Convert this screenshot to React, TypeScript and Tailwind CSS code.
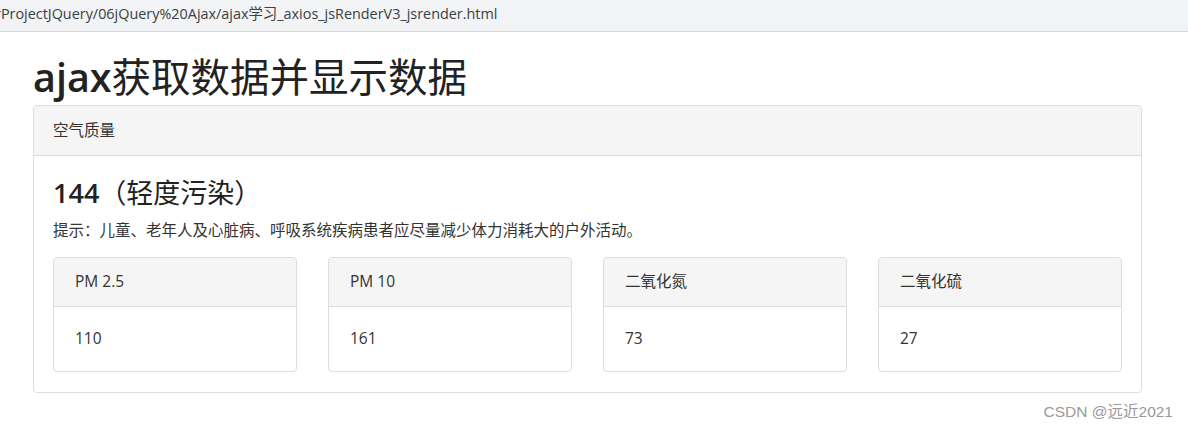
import React from "react";

const font = { fontFamily: '"Open Sans", "Noto Sans CJK SC", sans-serif' };

const items = [
  { name: "PM 2.5", value: "110" },
  { name: "PM 10", value: "161" },
  { name: "二氧化氮", value: "73" },
  { name: "二氧化硫", value: "27" },
];

export default function App() {
  return (
    <div className="relative w-[1188px] h-[427px] overflow-hidden bg-white text-[#333]" style={font}>
      <div className="h-[32px] bg-[#f1f3f4] border-b border-[#d6d8db] flex items-center overflow-hidden">
        <span className="ml-[-5px] mt-[-3px] text-[14.4px] text-[#3c4043] whitespace-nowrap">rProjectJQuery/06jQuery%20Ajax/ajax学习_axios_jsRenderV3_jsrender.html</span>
      </div>
      <div className="px-[33px]">
        <h1 className="text-[39.5px] leading-[48px] mt-[21px] mb-[4px] text-[#222] font-normal">
          <span className="font-semibold">ajax</span>获取数据并显示数据
        </h1>
        <div className="w-[1109px] border border-[#dddddd] rounded-[4px]">
          <div className="h-[50px] bg-[#f5f5f5] border-b border-[#dddddd] rounded-t-[4px] flex items-center px-[19px] text-[15.5px]">
            空气质量
          </div>
          <div className="px-[19px] pt-[19px] pb-[20px]">
            <h3 className="text-[27px] leading-[36px] text-[#222] font-normal">
              <span className="font-semibold">144</span>（轻度污染）
            </h3>
            <p className="text-[15.5px] leading-[22px] mt-[8px]">提示：儿童、老年人及心脏病、呼吸系统疾病患者应尽量减少体力消耗大的户外活动。</p>
            <div className="grid grid-cols-4 gap-[31px] mt-[16px]">
              {items.map((it) => (
                <div key={it.name} className="border border-[#dddddd] rounded-[4px]">
                  <div className="h-[49px] bg-[#f5f5f5] border-b border-[#dddddd] rounded-t-[4px] flex items-center px-[21px] text-[15.5px]">
                    {it.name}
                  </div>
                  <div className="h-[64px] flex items-center px-[21px] text-[15.5px]">{it.value}</div>
                </div>
              ))}
            </div>
          </div>
        </div>
      </div>
      <div className="absolute right-[15px] top-[400px] text-[15.5px] text-[#9a9a9a]" style={{ fontFamily: '"Liberation Sans", "Noto Sans CJK SC", sans-serif' }}>
        CSDN @远近2021
      </div>
    </div>
  );
}
